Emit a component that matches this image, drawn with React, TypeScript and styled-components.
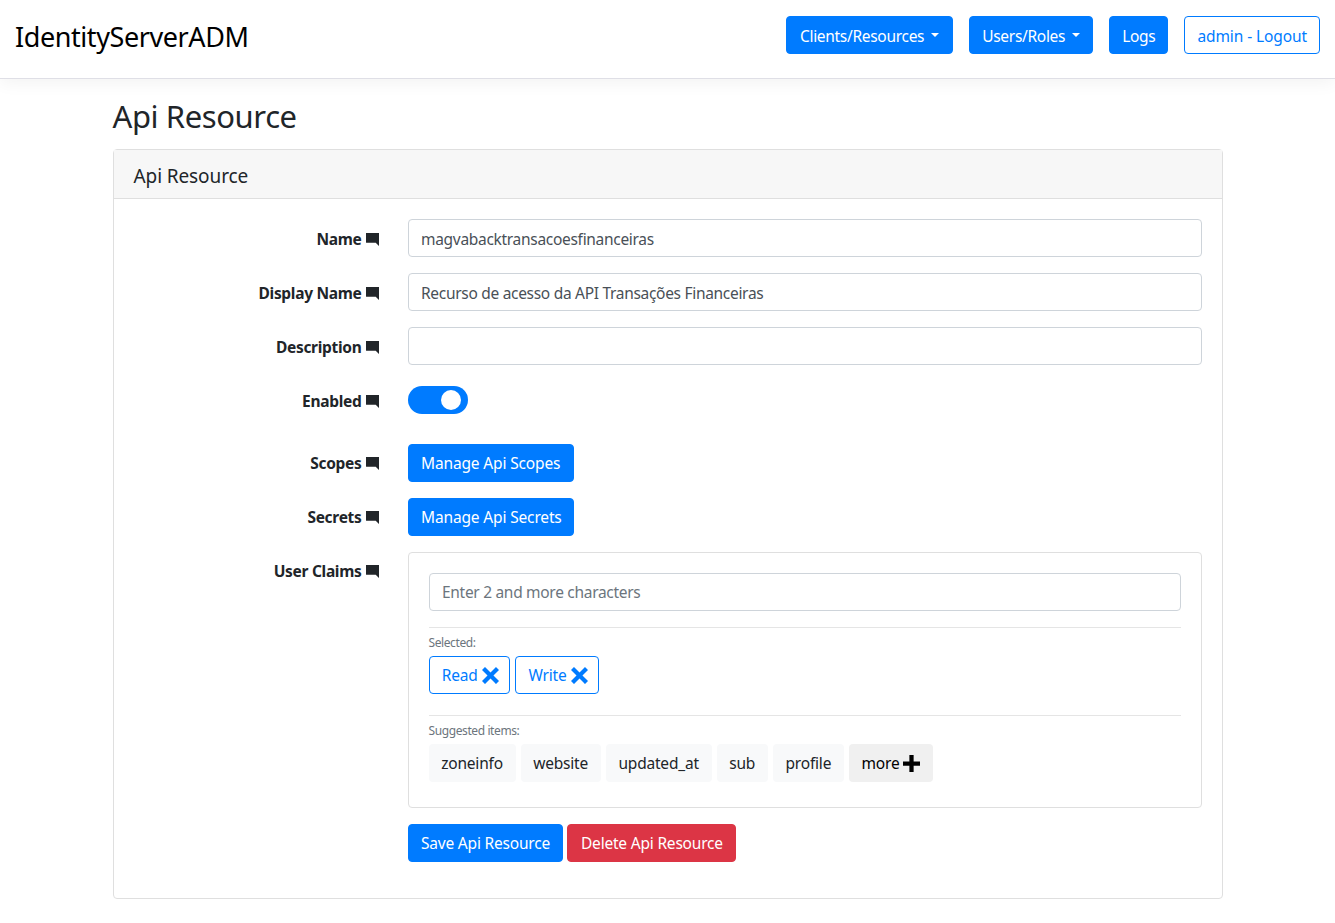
import React from "react";
import styled, { createGlobalStyle } from "styled-components";

const Global = createGlobalStyle`
  * { box-sizing: border-box; }
  html, body { margin: 0; padding: 0; background: #fff; }
  body {
    font-family: "Noto Sans", "Open Sans", sans-serif;
    font-size: 15.5px;
    line-height: 24px;
    letter-spacing: -0.2px;
    color: #212529;
  }
`;

const Navbar = styled.nav`
  height: 79px;
  padding: 16px 15px 0;
  display: flex;
  align-items: flex-start;
  justify-content: space-between;
  background: #fff;
  border-bottom: 1px solid #dfdfe6;
  box-shadow: 0 4px 16px rgba(0, 0, 0, 0.05);
`;

const Brand = styled.div`
  margin-top: 3px;
  font-size: 27px;
  line-height: 36px;
  letter-spacing: -0.42px;
  color: #000;
`;

const NavActions = styled.div`
  display: flex;
  gap: 16px;
`;

const Button = styled.button<{ $variant?: "primary" | "danger" }>`
  height: 38px;
  padding: 0 12px 0 12.5px;
  font: inherit;
  letter-spacing: -0.15px;
  white-space: nowrap;
  border-radius: 4px;
  display: inline-flex;
  align-items: center;
  border: 1px solid ${(p) => (p.$variant === "danger" ? "#dc3545" : "#007bff")};
  background: ${(p) => (p.$variant === "danger" ? "#dc3545" : "#007bff")};
  color: #fff;
`;

const ManageButton = styled(Button)`
  width: 166px;
`;

const ActionButton = styled(Button)`
  padding: 0 12.5px;
  letter-spacing: -0.2px;
`;

const NavButton = styled(Button)<{ $wide?: boolean }>`
  padding: 2px ${(p) => (p.$wide ? 13 : 12)}px 0 ${(p) => (p.$wide ? 12.5 : 12)}px;
  letter-spacing: -0.3px;
`;

const LogoutButton = styled(Button)`
  padding: 2px 12px 0;
  letter-spacing: -0.1px;
  background: #fff;
  color: #007bff;
`;

const Caret = styled.span`
  width: 0;
  height: 0;
  margin: -2px 0 0 7px;
  border-top: 4.8px solid #fff;
  border-left: 4.8px solid transparent;
  border-right: 4.8px solid transparent;
`;

const Container = styled.main`
  width: 1110px;
  margin: 0 auto;
`;

const Title = styled.h2`
  margin: 17px 0 13px;
  font-size: 31px;
  line-height: 40px;
  font-weight: 400;
  letter-spacing: -0.4px;
`;

const Card = styled.section`
  border: 1px solid #dfdfdf;
  border-radius: 4px;
`;

const CardHeader = styled.header`
  height: 49px;
  padding: 4px 20px 0;
  display: flex;
  align-items: center;
  font-size: 19px;
  letter-spacing: -0.1px;
  background: #f7f7f7;
  border-bottom: 1px solid #dfdfdf;
`;

const CardBody = styled.div`
  padding: 20px 20px 20px;
`;

const Row = styled.div<{ $height?: number }>`
  display: grid;
  grid-template-columns: 245px 794px;
  column-gap: 29px;
  margin-bottom: 16px;
  min-height: ${(p) => p.$height ?? 38}px;
`;

const LabelCell = styled.label<{ $low?: boolean }>`
  display: flex;
  justify-content: flex-end;
  align-items: center;
  gap: 4px;
  height: 38px;
  padding-top: ${(p) => (p.$low ? 2 : 0)}px;
  font-weight: 700;
  letter-spacing: -0.3px;
`;

const Input = styled.div<{ $placeholder?: boolean }>`
  height: 38px;
  padding: ${(p) => (p.$placeholder ? 0 : 2)}px 12px 0 12.5px;
  display: flex;
  align-items: center;
  letter-spacing: -0.3px;
  border: 1px solid #ced4da;
  border-radius: 4px;
  color: ${(p) => (p.$placeholder ? "#6c757d" : "#495057")};
`;

const Toggle = styled.div`
  width: 60px;
  height: 28px;
  margin-top: 5px;
  padding: 4px 7px;
  border-radius: 14px;
  background: #007bff;
  display: flex;
  justify-content: flex-end;
`;

const Knob = styled.span`
  width: 20px;
  height: 20px;
  border-radius: 50%;
  background: #fff;
`;

const ClaimsBox = styled.div`
  border: 1px solid #dfdfdf;
  border-radius: 4px;
  height: 256px;
  padding: 20px;
`;

const Divider = styled.hr<{ $flush?: boolean }>`
  margin: ${(p) => (p.$flush ? "21px 0 0" : "16px 0 0")};
  border: 0;
  border-top: 1px solid rgba(0, 0, 0, 0.1);
`;

const Small = styled.div`
  margin: 6px 0 4px;
  font-size: 12px;
  line-height: 18px;
  letter-spacing: -0.4px;
  color: #6c757d;
`;

const Chips = styled.div`
  display: flex;
  gap: 5px;
`;

const Selected = styled.div`
  height: 38px;
  padding: 0 10.75px 0 12.25px;
  display: inline-flex;
  align-items: center;
  gap: 4px;
  border: 1px solid #007bff;
  border-radius: 4px;
  color: #007bff;
`;

const Chip = styled.div<{ $more?: boolean }>`
  height: 38px;
  padding: 0 12.7px;
  display: inline-flex;
  align-items: center;
  gap: 4px;
  border-radius: 4px;
  background: ${(p) => (p.$more ? "#f0f0f0" : "#f8f9fa")};
  color: ${(p) => (p.$more ? "#000" : "#212529")};
`;

const Actions = styled.div`
  display: flex;
  gap: 4px;
`;

const Glyph = styled.svg<{ $size: number }>`
  width: ${(p) => p.$size}px;
  height: ${(p) => p.$size}px;
  flex: none;
  fill: currentColor;
`;

const COMMENT = "M.09 0c-.06 0-.09.04-.09.09v5.81c0 .05.04.09.09.09h5.91l2 2v-7.91c0-.06-.04-.09-.09-.09h-7.81z";
const CROSS = "M1.41 0l-1.41 1.41.72.72 1.88 1.88-1.88 1.88-.72.69 1.41 1.44.72-.72 1.88-1.91 1.88 1.91.69.72 1.44-1.44-.72-.69-1.91-1.88 1.91-1.88.72-.72-1.44-1.41-.69.72-1.88 1.88-1.88-1.88-.72-.72z";
const PLUS = "M3 0v3h-3v2h3v3h2v-3h3v-2h-3v-3h-2z";

const Icon = ({ d, size }: { d: string; size: number }) => (
  <Glyph $size={size} viewBox="0 0 8 8">
    <path d={d} />
  </Glyph>
);

const Label = ({ children, low }: { children: React.ReactNode; low?: boolean }) => (
  <LabelCell $low={low}>
    {children}
    <Icon d={COMMENT} size={13} />
  </LabelCell>
);

export default function App() {
  return (
    <>
      <Global />
      <Navbar>
        <Brand>IdentityServerADM</Brand>
        <NavActions>
          <NavButton $wide>Clients/Resources<Caret /></NavButton>
          <NavButton>Users/Roles<Caret /></NavButton>
          <NavButton>Logs</NavButton>
          <LogoutButton>admin - Logout</LogoutButton>
        </NavActions>
      </Navbar>
      <Container>
        <Title>Api Resource</Title>
        <Card>
          <CardHeader>Api Resource</CardHeader>
          <CardBody>
            <Row>
              <Label low>Name</Label>
              <Input>magvabacktransacoesfinanceiras</Input>
            </Row>
            <Row>
              <Label low>Display Name</Label>
              <Input>Recurso de acesso da API Transações Financeiras</Input>
            </Row>
            <Row>
              <Label low>Description</Label>
              <Input />
            </Row>
            <Row $height={47}>
              <Label low>Enabled</Label>
              <Toggle><Knob /></Toggle>
            </Row>
            <Row>
              <Label>Scopes</Label>
              <div><ManageButton>Manage Api Scopes</ManageButton></div>
            </Row>
            <Row>
              <Label>Secrets</Label>
              <div><ManageButton>Manage Api Secrets</ManageButton></div>
            </Row>
            <Row>
              <Label>User Claims</Label>
              <ClaimsBox>
                <Input $placeholder>Enter 2 and more characters</Input>
                <Divider />
                <Small>Selected:</Small>
                <Chips>
                  <Selected>Read<Icon d={CROSS} size={17} /></Selected>
                  <Selected>Write<Icon d={CROSS} size={17} /></Selected>
                </Chips>
                <Divider $flush />
                <Small>Suggested items:</Small>
                <Chips>
                  <Chip>zoneinfo</Chip>
                  <Chip>website</Chip>
                  <Chip>updated_at</Chip>
                  <Chip>sub</Chip>
                  <Chip>profile</Chip>
                  <Chip $more>more<Icon d={PLUS} size={17} /></Chip>
                </Chips>
              </ClaimsBox>
            </Row>
            <Row>
              <span />
              <Actions>
                <ActionButton>Save Api Resource</ActionButton>
                <ActionButton $variant="danger">Delete Api Resource</ActionButton>
              </Actions>
            </Row>
          </CardBody>
        </Card>
      </Container>
    </>
  );
}
